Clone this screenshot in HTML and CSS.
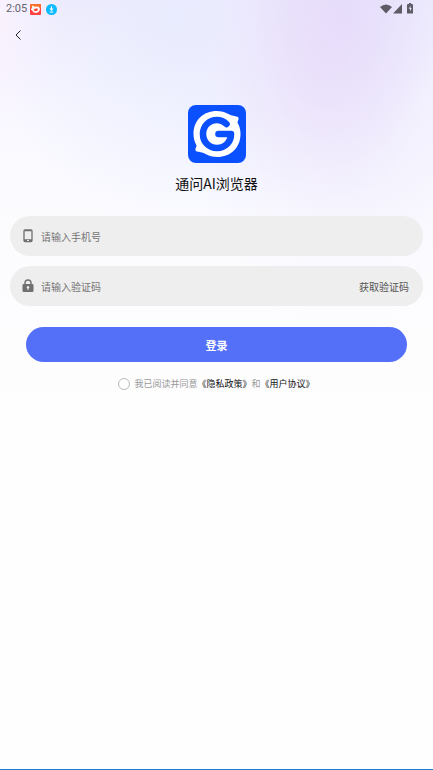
FILE: index.html
```html
<!DOCTYPE html>
<html lang="zh-CN">
<head>
<meta charset="utf-8">
<meta name="viewport" content="width=device-width, initial-scale=1">
<title>通问AI浏览器</title>
<link rel="stylesheet" href="styles.css">
</head>
<body>
<div class="screen">
  <header class="status">
    <span class="time">2:05</span>
    <svg class="app" viewBox="0 0 12 12" aria-hidden="true"><rect width="12" height="12" rx="1" fill="#fb4340"/><path d="M0 1Q0 0 1 0H11Q12 0 12 1V4H0Z" fill="#fb7028"/><path d="M2.500 2Q4 1.500 4.700 3Q6 2.300 7.500 3Q9 2 10 3.500Q11.300 5 10.500 7Q9.500 9.700 6.300 9.700Q3 9.700 2.500 7.200Q1 7 1 5.500Q1 4.500 2.500 4.500Q1.500 3 2.500 2Z" fill="#fff"/><path d="M4 6.300Q4.400 4.700 5.300 5.700Q7 3.800 8.600 5.500Q8.700 8 6.300 8Q4.300 8 4 6.300Z" fill="#fa4b35"/></svg>
    <svg class="app download" viewBox="0 0 12 12" aria-hidden="true"><circle cx="6" cy="6" r="6" fill="#08baff"/><path d="M6 2.500V6M4 8.800H8" fill="none" stroke="#fff" stroke-width="1.200"/><path d="M3.700 5H8.300L6 7.700Z" fill="#fff"/></svg>
    <svg class="signals" viewBox="0 0 34 12" aria-hidden="true"><g fill="#5d5c66"><path d="M0 4Q6 -1 12 4L6 10.500Z"/><path d="M22 1V10.500H13Z"/><path d="M28 1H29V0H31V1H32Q33 1 33 2V10.500H27V2Q27 1 28 1Z"/></g><path d="M30.600 2.500L28.700 5.700H30V8.500L31.700 5H30.500Z" fill="#e6e1fb"/></svg>
  </header>
  <nav class="nav">
    <button class="back" type="button" aria-label="返回"><svg viewBox="0 0 8 12" aria-hidden="true"><path d="M6.500 1.500L2 6L6.500 10.500" fill="none" stroke="#222"/></svg></button>
  </nav>
  <main class="main">
    <svg class="logo" viewBox="0 0 58 58" role="img" aria-label="通问AI浏览器">
      <rect width="58" height="58" rx="8" fill="#0b50ff"/>
      <path d="M29 6C36 6 40 9 44 10.500C47 11.500 50 11 50.500 13C51 14.500 49.500 16 49.500 17.500C51.500 21 52.500 25 52.500 29C52.500 42.500 43 52 29 52C22 52 18 49 14 47.500C11 46.500 8 47.500 7.500 45C7 43.500 8.500 42 8.500 40.500C6.500 37 5.500 33 5.500 29C5.500 15.500 15 6 29 6Z" fill="#fff"/>
      <path d="M38.500 19C36 16.500 32.500 15 29 15C21 15 15 21 15 29C15 37 21 43 29 43C37 43 43 37 43 29H30.500" fill="none" stroke="#0b50ff" stroke-width="6.600" stroke-linecap="round" stroke-linejoin="round"/>
    </svg>
    <h1 class="title">通问AI浏览器</h1>
    <form class="form">
      <div class="field">
        <label for="phone" aria-label="手机号"><svg viewBox="0 0 12 14" aria-hidden="true"><rect x="2" y="1" width="8" height="11.500" rx="1" fill="none" stroke="#707070" stroke-width="1.300"/><path d="M2 10.300H10V12.500H2ZM2 1H10V2.300H2Z" fill="#707070"/><path d="M5 11.500H7" stroke="#eee"/></svg></label>
        <input id="phone" type="tel" placeholder="请输入手机号">
      </div>
      <div class="field">
        <label for="code" aria-label="验证码"><svg viewBox="0 0 12 14" aria-hidden="true"><path d="M3 6V4Q3 1 6 1Q9 1 9 4V6" fill="none" stroke="#707070" stroke-width="1.400"/><rect x="0.500" y="5" width="11" height="8" rx="1" fill="#707070"/><circle cx="6" cy="8.300" r="1.200" fill="#eee"/><path d="M6 8V11" stroke="#eee"/></svg></label>
        <input id="code" type="text" placeholder="请输入验证码">
        <button class="send" type="button">获取验证码</button>
      </div>
      <button class="login" type="submit">登录</button>
      <div class="agreement">
        <input id="agree" type="checkbox">
        <p><label for="agree">我已阅读并同意</label><a href="#">《隐私政策》</a>和<a href="#">《用户协议》</a></p>
      </div>
    </form>
  </main>
</div>
</body>
</html>
```
FILE: styles.css
```css
* {
  box-sizing: border-box;
}

body {
  margin: 0;
  font-family: "Noto Sans CJK SC", sans-serif;
}

button,
input {
  margin: 0;
  padding: 0;
  border: 0;
  background: none;
  font: inherit;
}

svg {
  display: block;
}

.screen {
  min-height: 100vh;
  border-bottom: 1px solid #1d7fcb;
  background:
    radial-gradient(ellipse 110px 170px at 75% 45px, rgba(234, 216, 248, 0.55), transparent),
    radial-gradient(ellipse 190px 330px at 80% 0, rgba(226, 222, 252, 0.9), rgba(236, 233, 253, 0.5) 50%, transparent),
    radial-gradient(ellipse 190px 220px at 42% 20px, rgba(232, 236, 254, 0.9), transparent),
    radial-gradient(ellipse 60px 120px at 0 20px, #fbf3fe, transparent),
    linear-gradient(#efebfd, #f8f7ff 100px, #fcfcff 220px, #fefefe 440px);
}

.status {
  display: flex;
  align-items: center;
  height: 18px;
  padding: 0 19px 0 6px;
}

.time {
  color: #65636b;
  font: 11px/16px Roboto, sans-serif;
}

.app {
  width: 11px;
  height: 11px;
  margin-left: 3px;
}

.download {
  margin-left: 5px;
}

.signals {
  width: 34px;
  height: 12px;
  margin-left: auto;
}

.nav {
  display: flex;
  align-items: center;
  height: 34px;
  padding: 0 14px;
}

.back {
  display: grid;
  place-items: center;
  width: 8px;
  height: 34px;
}

.back svg {
  width: 8px;
  height: 12px;
}

.main {
  display: flex;
  flex-direction: column;
  align-items: center;
  padding: 53px 10px 0;
}

.logo {
  width: 58px;
  height: 58px;
}

.title {
  margin: 10px 0 23px;
  color: #111;
  font-size: 14px;
  font-weight: 400;
  line-height: 20px;
}

.form {
  display: flex;
  flex-direction: column;
  gap: 10px;
  width: 100%;
}

.field {
  display: flex;
  align-items: center;
  gap: 7px;
  height: 40px;
  padding: 0 14px 0 12px;
  border-radius: 20px;
  background: #eee;
  font-size: 10px;
}

.field svg {
  width: 12px;
  height: 14px;
}

.field input {
  flex: 1;
  min-width: 0;
  height: 40px;
  outline: 0;
}

.field input::placeholder {
  color: #757575;
  opacity: 1;
}

.send {
  color: #555;
}

.login {
  height: 35px;
  margin: 11px 16px 0;
  border-radius: 18px;
  background: #5570f8;
  color: #fff;
  font-size: 11px;
  font-weight: 700;
}

.agreement {
  display: flex;
  align-items: center;
  justify-content: center;
  gap: 4px;
  margin-top: 4px;
  color: #999;
  font-size: 9px;
  line-height: 16px;
}

.agreement input {
  width: 12px;
  height: 12px;
  border: 1px solid #bbb;
  border-radius: 50%;
  appearance: none;
}

.agreement input:checked {
  background: #5570f8;
}

.agreement p {
  margin: 0;
}

.agreement a {
  color: #111;
  text-decoration: none;
}
```
